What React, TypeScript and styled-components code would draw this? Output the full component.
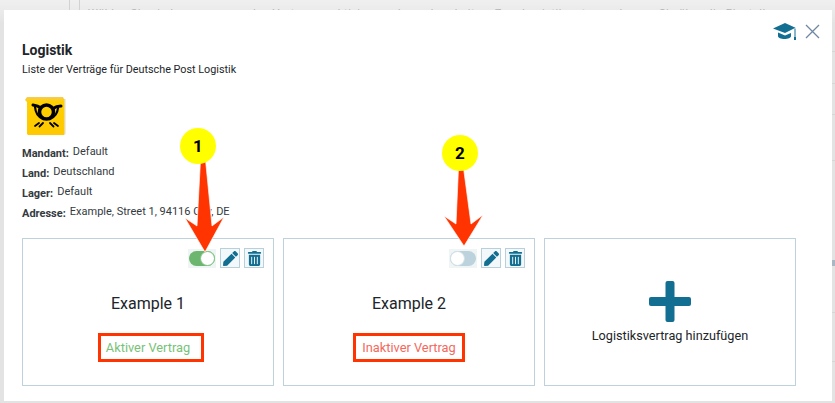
import React from "react";
import styled, { createGlobalStyle } from "styled-components";
import { FaPen, FaTrashAlt } from "react-icons/fa";

const GlobalStyle = createGlobalStyle`
  html, body {
    margin: 0;
    padding: 0;
    background: #e3e3e3;
  }
  body {
    font-family: Roboto, "Liberation Sans", sans-serif;
    color: #212529;
  }
`;

const Page = styled.div`
  position: relative;
  width: 835px;
  height: 403px;
  overflow: hidden;
  background:
    linear-gradient(#d2d2d2, #d2d2d2) 69px 0 / 1px 10px no-repeat,
    linear-gradient(#d2d2d2, #d2d2d2) 79px 0 / 1px 10px no-repeat,
    linear-gradient(#d6d6d6, #d6d6d6) 832px 51px / 3px 1px no-repeat,
    linear-gradient(#d6d6d6, #d6d6d6) 832px 83px / 3px 1px no-repeat,
    linear-gradient(#d6d6d6, #d6d6d6) 832px 114px / 3px 1px no-repeat,
    linear-gradient(#d6d6d6, #d6d6d6) 832px 160px / 3px 1px no-repeat,
    linear-gradient(#d6d6d6, #d6d6d6) 832px 312px / 3px 1px no-repeat,
    linear-gradient(#d6d6d6, #d6d6d6) 832px 361px / 3px 1px no-repeat,
    linear-gradient(#a9b6c4, #a9b6c4) 832px 260px / 3px 6px no-repeat,
    linear-gradient(#f0f0f0, #e3e3e3 24px);
`;

const BackText = styled.div`
  padding: 7px 0 0 88px;
  font-size: 11px;
  letter-spacing: 0.55px;
  line-height: 13px;
  color: #b4b4b4;
  white-space: nowrap;
`;

const Modal = styled.div`
  position: absolute;
  left: 4px;
  top: 10px;
  width: 828px;
  height: 391px;
  box-sizing: border-box;
  padding: 0 36px 0 18px;
  background: #fff;
`;

const TopIcons = styled.div`
  display: flex;
  justify-content: flex-end;
  align-items: center;
  gap: 8px;
  height: 20px;
  margin: 11px -24px 0 0;
  color: #136f91;
`;

const Title = styled.h1`
  margin: 1px 0 0;
  font-size: 14px;
  line-height: 17px;
  font-weight: 700;
`;

const Subtitle = styled.p`
  margin: 4px 0 0;
  font-size: 10.8px;
  line-height: 13px;
`;

const LogoWrap = styled.div`
  width: 41px;
  height: 40px;
  margin: 20px 0 0 3px;
`;

const InfoList = styled.div`
  display: flex;
  flex-direction: column;
  gap: 7px;
  margin-top: 9px;
`;

const InfoRow = styled.div`
  display: flex;
  align-items: flex-start;
  gap: 4px;
  height: 13px;
  font-size: 11px;
  line-height: 13px;
`;

const InfoLabel = styled.span`
  font-weight: 700;
  color: #343a40;
  padding-top: 2px;
`;

const InfoValue = styled.span`
  color: #343a40;
`;

const Cards = styled.div`
  display: grid;
  grid-template-columns: repeat(3, 252px);
  gap: 9px;
  margin-top: 20px;
`;

const Card = styled.div`
  display: flex;
  flex-direction: column;
  align-items: center;
  height: 148px;
  box-sizing: border-box;
  padding: 9px 9px 0;
  border: 1px solid #bdd2dc;
  background: #fff;
`;

const CardTools = styled.div`
  display: flex;
  align-self: flex-end;
  align-items: center;
  gap: 4px;
  height: 20px;
`;

const ToggleBox = styled.div`
  display: flex;
  align-items: center;
  justify-content: center;
  width: 28px;
  height: 19px;
  background: #eff5f4;
`;

const Track = styled.div<{ $on: boolean }>`
  display: flex;
  justify-content: ${(p) => (p.$on ? "flex-end" : "flex-start")};
  width: 26px;
  height: 15px;
  border-radius: 8px;
  background: ${(p) => (p.$on ? "#6cb66f" : "#bcd2dc")};
`;

const Knob = styled.div<{ $on: boolean }>`
  width: 15px;
  height: 15px;
  box-sizing: border-box;
  border-radius: 50%;
  background: #fff;
  border: 1px solid ${(p) => (p.$on ? "#7fc483" : "#d2dfe5")};
`;

const ToolButton = styled.button`
  display: flex;
  align-items: center;
  justify-content: center;
  width: 20px;
  height: 20px;
  padding: 0;
  border: 1px solid #b9cfda;
  background: #f3f8fa;
  color: #136f91;
  font-size: 15px;
`;

const CardName = styled.div`
  margin-top: 26px;
  font-size: 16px;
  line-height: 20px;
  color: #212529;
`;

const Status = styled.div<{ $active: boolean }>`
  display: flex;
  align-items: center;
  height: 29px;
  box-sizing: border-box;
  margin: 19px 0 0 ${(p) => (p.$active ? "6px" : "0")};
  padding: ${(p) => (p.$active ? "0 11px 0 5px" : "0 6px")};
  border: 3px solid #ff3400;
  font-size: 12.8px;
  color: ${(p) => (p.$active ? "#78c278" : "#f4695d")};
`;

const AddLabel = styled.div`
  margin-top: 6px;
  font-size: 12.7px;
  line-height: 16px;
`;

const PlusWrap = styled.div`
  display: flex;
  margin-top: 33px;
  color: #136f91;
`;

const Badge = styled.div<{ $x: number; $y: number }>`
  position: absolute;
  left: ${(p) => p.$x}px;
  top: ${(p) => p.$y}px;
  display: flex;
  align-items: center;
  justify-content: center;
  width: 36px;
  height: 36px;
  border-radius: 50%;
  background: #ffff00;
  color: #000;
  font-size: 17px;
  font-weight: 700;
`;

const ArrowLayer = styled.svg`
  position: absolute;
  left: 0;
  top: 0;
  pointer-events: none;
`;

const PostLogo = () => (
  <svg width="41" height="40" viewBox="0 0 41 40">
    <defs>
      <linearGradient id="postYellow" x1="0" y1="0" x2="0" y2="1">
        <stop offset="0" stopColor="#f6c95a" />
        <stop offset="0.12" stopColor="#ffd000" />
        <stop offset="1" stopColor="#ffc800" />
      </linearGradient>
    </defs>
    <path d="M2 1h36l1 2v36H3l-1-1V6L0 4z" fill="url(#postYellow)" />
    <path d="M39 3h1.500v35l-1.500 1z" fill="#e9d9a0" />
    <g fill="none" stroke="#000" strokeLinecap="round">
      <circle cx="21.500" cy="16" r="7" strokeWidth="3.500" />
      <path d="M8 9c3 .5 6 1.500 8 3" strokeWidth="3" />
      <path d="M36 10c-3 0-6 1-8 2.500" strokeWidth="3" />
      <path d="M10 11c.5 6 3 10 8 12" strokeWidth="2.200" />
      <path d="M33 12c-.5 5-3 9-8 11" strokeWidth="2.200" />
    </g>
    <g stroke="#000" strokeWidth="1.800" strokeLinecap="round">
      <path d="M10 30l4-3M14.500 30.500l3.500-3.500" />
      <path d="M33 30l-4-3M28.500 30.500l-3.500-3.500" />
    </g>
  </svg>
);

const CapIcon = () => (
  <svg width="24" height="19" viewBox="0 0 24 19" fill="currentColor">
    <path d="M0 6.500L12 1l10.500 4.800L12 11z" />
    <path d="M5 10.500l7 3 6-2.600V14c0 1.800-3 3-6.500 3S5 15.800 5 14z" />
    <path d="M21.500 6.500h1V15h-1z" />
    <path d="M21 15h2v3h-2z" />
  </svg>
);

const CloseIcon = () => (
  <svg width="15" height="15" viewBox="0 0 15 15">
    <path d="M1 1l13 13M14 1L1 14" stroke="#6f87a5" strokeWidth="1.300" fill="none" />
  </svg>
);

const PlusIcon = () => (
  <svg width="42" height="41" viewBox="0 0 42 41" fill="currentColor">
    <rect x="16.500" y="0" width="9" height="41" rx="2" />
    <rect x="0" y="16" width="42" height="9" rx="2" />
  </svg>
);

const Arrow = ({ top, tip, barbY }: { top: number[]; tip: number[]; barbY: number }) => {
  const [tx, ty] = top;
  const [px, py] = tip;
  const points = [
    [tx - 2.5, ty],
    [tx + 2.5, ty],
    [px + 7, barbY + 8],
    [px + 19, barbY - 1],
    [px, py],
    [px - 20, barbY],
    [px - 8, barbY + 8],
  ]
    .map((p) => p.join(","))
    .join(" ");
  return <polygon points={points} fill="#ff3400" stroke="#fff" strokeOpacity="0.65" strokeWidth="1" />;
};

const contracts = [
  { name: "Example 1", active: true },
  { name: "Example 2", active: false },
];

const info = [
  { label: "Mandant:", value: "Default" },
  { label: "Land:", value: "Deutschland" },
  { label: "Lager:", value: "Default" },
  { label: "Adresse:", value: "Example, Street 1, 94116 City, DE" },
];

export default function App() {
  return (
    <Page>
      <GlobalStyle />
      <BackText>Wählen Sie ein Lager aus, um den Vertrag zu aktivieren oder zu bearbeiten. Zum Logistikvertrag gelangen Sie über die Einstellungen.</BackText>
      <Modal>
        <TopIcons>
          <CapIcon />
          <CloseIcon />
        </TopIcons>
        <Title>Logistik</Title>
        <Subtitle>Liste der Verträge für Deutsche Post Logistik</Subtitle>
        <LogoWrap>
          <PostLogo />
        </LogoWrap>
        <InfoList>
          {info.map((row) => (
            <InfoRow key={row.label}>
              <InfoLabel>{row.label}</InfoLabel>
              <InfoValue>{row.value}</InfoValue>
            </InfoRow>
          ))}
        </InfoList>
        <Cards>
          {contracts.map((c) => (
            <Card key={c.name}>
              <CardTools>
                <ToggleBox>
                  <Track $on={c.active}>
                    <Knob $on={c.active} />
                  </Track>
                </ToggleBox>
                <ToolButton>
                  <FaPen />
                </ToolButton>
                <ToolButton>
                  <FaTrashAlt />
                </ToolButton>
              </CardTools>
              <CardName>{c.name}</CardName>
              <Status $active={c.active}>{c.active ? "Aktiver Vertrag" : "Inaktiver Vertrag"}</Status>
            </Card>
          ))}
          <Card>
            <PlusWrap>
              <PlusIcon />
            </PlusWrap>
            <AddLabel>Logistiksvertrag hinzufügen</AddLabel>
          </Card>
        </Cards>
      </Modal>
      <ArrowLayer width="835" height="403">
        <Arrow top={[203, 160]} tip={[205, 252]} barbY={218} />
        <Arrow top={[461, 168]} tip={[464, 246]} barbY={216} />
      </ArrowLayer>
      <Badge $x={180} $y={128}>1</Badge>
      <Badge $x={442} $y={135}>2</Badge>
    </Page>
  );
}
